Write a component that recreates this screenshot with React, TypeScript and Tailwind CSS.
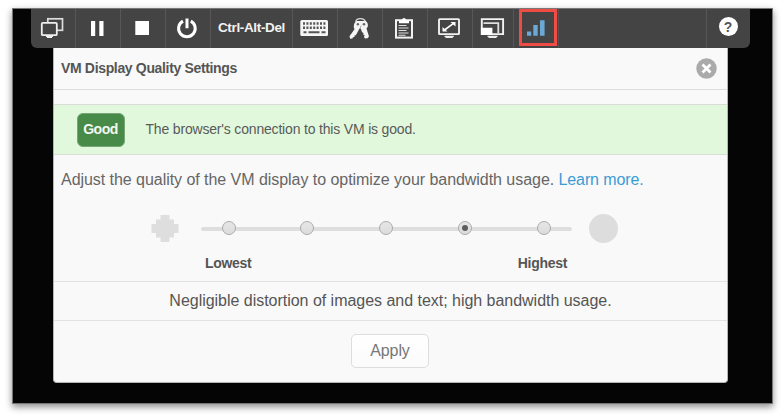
import type { ReactNode } from 'react';

const sans = "font-['Liberation_Sans',Arial,sans-serif]";

function Cell({ x, w, label, children }: { x: number; w: number; label: string; children?: ReactNode }) {
  return (
    <button aria-label={label} className="block h-[39px] shrink-0 border-r border-[#575757]" style={{ width: w }}>
      <svg className="block" width={w - 1} height="39" viewBox={`${x} 9 ${w - 1} 39`} fill="none">
        {children}
      </svg>
    </button>
  );
}

function Toolbar() {
  return (
    <div className="flex h-[39px] w-[719px] overflow-hidden rounded-b-md bg-[#444444]">
      <Cell x={31} w={45} label="Displays">
        <rect x="47.8" y="18.8" width="14.7" height="11.5" stroke="#dcdcdc" strokeWidth="1.7" />
        <rect x="41.8" y="22.8" width="15" height="12.4" rx="1" fill="#444444" stroke="#eeeeee" strokeWidth="1.8" />
        <path d="M46 35.5h7V37h-1v1h-5v-1h-1z" fill="#eeeeee" />
      </Cell>
      <Cell x={76} w={45} label="Pause">
        <path d="M91 21h4.2v15H91zM99.3 21h4.2v15h-4.2z" fill="#fff" />
      </Cell>
      <Cell x={121} w={45} label="Stop">
        <rect x="135.3" y="21" width="13.7" height="14" fill="#fff" />
      </Cell>
      <Cell x={166} w={45} label="Power">
        <path d="M183 21.1a8.3 8.3 0 1 0 7.8 0" stroke="#fff" strokeWidth="3" />
        <path d="M187 18.6v9.6" stroke="#fff" strokeWidth="3" />
      </Cell>
      <button className="flex h-[39px] w-[82px] shrink-0 items-center justify-center border-r border-[#575757] text-[13.5px] font-bold tracking-[-0.35px] whitespace-nowrap text-[#f2f2f2]">
        Ctrl-Alt-Del
      </button>
      <Cell x={293} w={45} label="Keyboard">
        <rect x="300.3" y="20" width="27.7" height="16" rx="1.5" fill="#f5f5f5" />
        <path d="M303 23.5h22.6M303 27.8h22.6" stroke="#555" strokeWidth="2.4" strokeDasharray="2 1.4" />
        <path d="M303.5 32.3h3M308.5 32.3h11M321.5 32.3h4" stroke="#555" strokeWidth="2" />
      </Cell>
      <Cell x={338} w={45} label="Keys">
        <path d="M355.7 21.8c.3-2.2 1.9-3.2 4.6-3.2s4.6 1 5 3.2" stroke="#d8d8d8" strokeWidth="1.4" />
        <path d="M356.5 21h9c1.5 1 2.5 2.4 2.4 4.2 0 1.3-.5 2.4-1.4 3.3l2.5 8-1.5 1.8-2.6.2-1-2 .9-1.2-1.7-.8.4-1.4-1.4-.8-1.4-3.8-1.2-.1-3.5 6.6-1.7.8.4 1.3-1.8.2-.4 1.2-2.4.2-.6-2.5 5-7c-1.3-2.4-.8-6.5 2-8z" fill="#f5f5f5" />
        <circle cx="357.9" cy="24.3" r="1.2" fill="#666" />
        <circle cx="364" cy="24.3" r="1.3" fill="#666" />
        <path d="m361 25.5-1 3.5" stroke="#999" strokeWidth=".8" />
      </Cell>
      <Cell x={383} w={45} label="Clipboard">
        <rect x="396" y="20.2" width="16" height="17.4" stroke="#f2f2f2" strokeWidth="2" />
        <path d="M399 23.3v-2.6h3c0-1.6.7-2.7 2-2.7s2 1.1 2 2.7h3v2.6z" fill="#fff" />
        <path d="M398.5 25.5h8M398.5 28h10M398.5 30.5h8M398.5 33h10M398.5 35.3h7" stroke="#dedede" strokeWidth="1.1" />
      </Cell>
      <Cell x={428} w={45} label="Full screen">
        <rect x="439" y="19.1" width="20" height="15" rx=".7" stroke="#f0f0f0" strokeWidth="1.9" />
        <path d="m444.5 30 9-6.7" stroke="#fff" strokeWidth="1.6" />
        <path d="M450.5 22h5v4.5zM442.5 27v4.6h5z" fill="#fff" />
        <path d="M444.5 35.7h9.3V37h-1v1h-7.3v-1h-1z" fill="#ededed" />
      </Cell>
      <Cell x={473} w={41} label="Scale display">
        <path d="M481.8 28v-8.9h21.3v15H492" stroke="#f2f2f2" strokeWidth="1.9" />
        <path d="M483.5 23.2h14.8V33" stroke="#dedede" strokeWidth="1.8" />
        <path d="M480.8 27.7h11.6V35h-11.6z" fill="#fff" />
        <path d="M487.5 35.7h10V37h-1v1h-8v-1h-1z" fill="#ededed" />
      </Cell>
      <div className="flex h-[39px] w-[45px] shrink-0 border-r border-[#535353] pl-[5px]">
        <button aria-label="Display quality" className="h-[37px] w-[38px] border-[3px] border-[#ee4c45]">
          <svg className="block" width="32" height="31" viewBox="522 12 32 31">
            <path d="M527 31.5h4.2v4.3H527zM533.3 25h4.4v10.8h-4.4zM540 20.2h4.6v15.6H540z" fill="#6ba8d6" />
          </svg>
        </button>
      </div>
      <div className="flex-1 border-r border-[#575757]" />
      <button aria-label="Help" className="flex h-[39px] w-[43px] shrink-0 justify-center pt-2">
        <span className="mr-px flex size-[19px] items-center justify-center rounded-full bg-white text-[14px] leading-none font-bold text-[#555]">?</span>
      </button>
    </div>
  );
}

function QualitySlider() {
  const stops = [0, 1, 2, 3, 4];
  return (
    <div className="flex h-[32px] items-center pl-[97px]">
      <svg width="28" height="28" viewBox="0 0 28 28" fill="#dedede" className="mt-[2px] block">
        <path d="M9.5 0h9v4.5H23V9h4.5v9H23v4.5h-4.5V27h-9v-4.5H5V18H.5V9H5V4.5h4.5z" />
      </svg>
      <div className="ml-[22px] grid w-[371px] items-center">
        <div className="col-start-1 row-start-1 mt-[2px] h-[4px] rounded-full bg-[#dedede]" />
        <div className="col-start-1 row-start-1 flex justify-between pr-[21.5px] pl-[20.5px]">
          {stops.map((stop) => (
            <span key={stop} className="flex size-[14px] items-center justify-center rounded-full border border-[#ababab] bg-linear-to-b from-[#e6e6e6] to-[#dcdcdc]">
              {stop === 3 && <span className="size-[6px] rounded-full bg-[#5c5c5c]" />}
            </span>
          ))}
        </div>
      </div>
      <div className="ml-[16.5px] size-[29px] rounded-full bg-[#dddddd]" />
    </div>
  );
}

export default function App() {
  return (
    <div className={`h-[418px] w-[784px] overflow-hidden bg-white pt-[8px] pl-[12px] ${sans}`}>
      <div className="flex h-[396px] w-[761px] flex-col border border-[#777] bg-[#050505] pl-[18px] shadow-[0_3px_7px_rgba(0,0,0,0.45)]">
        <Toolbar />
        <div className="ml-[22px] flex h-[335px] w-[675px] flex-col overflow-hidden rounded-b-[4px] border-r border-b border-l border-[#b5b5b5] bg-[#f9f9f9]">
          <div className="flex h-[42px] shrink-0 items-center justify-between border-b border-[#dddddd] pr-[10px] pl-[7px]">
            <h1 className="text-[14px] font-bold tracking-[-0.34px] whitespace-nowrap text-[#555]">VM Display Quality Settings</h1>
            <button aria-label="Close" className="block">
              <svg width="21" height="21" viewBox="0 0 21 21" className="block">
                <circle cx="10.5" cy="10.5" r="10.2" fill="#aaaaaa" />
                <path d="m6.5 6.5 8 8m0-8-8 8" stroke="#fff" strokeWidth="2.8" />
              </svg>
            </button>
          </div>
          <div className="mt-[14px] flex h-[51px] shrink-0 items-center border-y border-[#d8ddd6] bg-[#e1f8dc] pl-[22.5px]">
            <span className="flex h-[34px] w-[48px] items-center justify-center rounded-md border border-[#76a576] bg-[#488b49] text-[14px] font-bold tracking-[-0.5px] text-[#f3f8f3]">Good</span>
            <span className="ml-[21px] text-[14px] tracking-[-0.18px] whitespace-nowrap text-[#5a5a5a]">The browser's connection to this VM is good.</span>
          </div>
          <p className="mt-[13px] pl-[7px] text-[16px] leading-[24px] tracking-[-0.045px] whitespace-nowrap text-[#666]">
            Adjust the quality of the VM display to optimize your bandwidth usage. <a className="tracking-[-0.12px] text-[#3a9cd6]">Learn more.</a>
          </p>
          <div className="mt-[20px]"><QualitySlider /></div>
          <div className="mt-[9px] flex h-[20px] shrink-0 justify-between pr-[160px] pl-[151px] text-[14px] leading-[20px] font-bold tracking-[-0.3px] text-[#555]">
            <span>Lowest</span><span>Highest</span>
          </div>
          <p className="mt-[8px] h-[40px] shrink-0 border-y border-[#e2e2e2] text-center text-[16px] leading-[38px] tracking-[-0.025px] whitespace-nowrap text-[#555]">
            Negligible distortion of images and text; high bandwidth usage.
          </p>
          <button className="mt-[13px] mr-px h-[34px] w-[78px] shrink-0 self-center rounded-[5px] border border-[#dddddd] bg-linear-to-b from-white to-[#fbfbfb] text-[16px] tracking-[-0.1px] text-[#777]">Apply</button>
        </div>
      </div>
    </div>
  );
}
